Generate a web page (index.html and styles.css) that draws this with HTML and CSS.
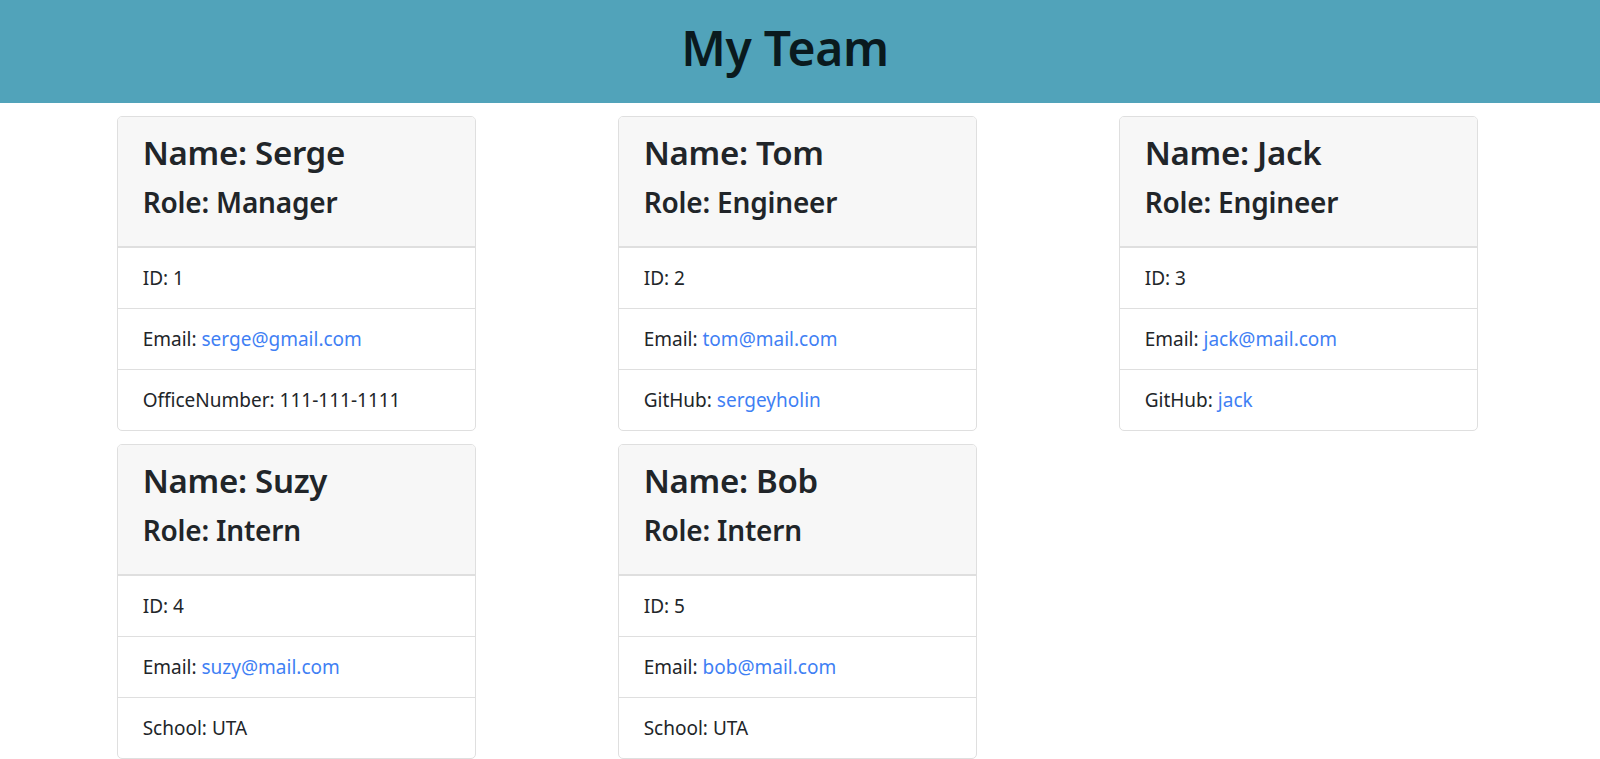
FILE: index.html
```html
<!DOCTYPE html>
<html lang="en">
<head>
<meta charset="utf-8">
<title>My Team</title>
<link rel="stylesheet" href="styles.css">
</head>
<body>
<header class="banner">
  <h1 class="banner-title">My Team</h1>
</header>
<main class="team">
  <div class="card">
    <div class="card-header">
      <h3 class="card-name">Name: Serge</h3>
      <h4 class="card-role">Role: Manager</h4>
    </div>
    <ul class="list">
      <li class="item">ID: 1</li>
      <li class="item">Email: <a class="link" href="#">serge@gmail.com</a></li>
      <li class="item">OfficeNumber: 111-111-1111</li>
    </ul>
  </div>
  <div class="card">
    <div class="card-header">
      <h3 class="card-name">Name: Tom</h3>
      <h4 class="card-role">Role: Engineer</h4>
    </div>
    <ul class="list">
      <li class="item">ID: 2</li>
      <li class="item">Email: <a class="link" href="#">tom@mail.com</a></li>
      <li class="item">GitHub: <a class="link" href="#">sergeyholin</a></li>
    </ul>
  </div>
  <div class="card">
    <div class="card-header">
      <h3 class="card-name">Name: Jack</h3>
      <h4 class="card-role">Role: Engineer</h4>
    </div>
    <ul class="list">
      <li class="item">ID: 3</li>
      <li class="item">Email: <a class="link" href="#">jack@mail.com</a></li>
      <li class="item">GitHub: <a class="link" href="#">jack</a></li>
    </ul>
  </div>
  <div class="card">
    <div class="card-header">
      <h3 class="card-name">Name: Suzy</h3>
      <h4 class="card-role">Role: Intern</h4>
    </div>
    <ul class="list">
      <li class="item">ID: 4</li>
      <li class="item">Email: <a class="link" href="#">suzy@mail.com</a></li>
      <li class="item">School: UTA</li>
    </ul>
  </div>
  <div class="card">
    <div class="card-header">
      <h3 class="card-name">Name: Bob</h3>
      <h4 class="card-role">Role: Intern</h4>
    </div>
    <ul class="list">
      <li class="item">ID: 5</li>
      <li class="item">Email: <a class="link" href="#">bob@mail.com</a></li>
      <li class="item">School: UTA</li>
    </ul>
  </div>
</main>
</body>
</html>
```

FILE: styles.css
```css
html, body {
  margin: 0;
  padding: 0;
}
body {
  font-family: "Noto Sans", "Open Sans", sans-serif;
  font-size: 19px;
  line-height: 30px;
  color: #212529;
  background: #ffffff;
}
.banner {
  height: 103px;
  background: #51a3ba;
  display: flex;
  align-items: center;
  justify-content: center;
  padding: 0 30px 8px 0;
  box-sizing: border-box;
}
.banner-title {
  margin: 0;
  font-size: 48px;
  font-weight: 600;
  line-height: 1.2;
  letter-spacing: -0.3px;
  color: #0a1a1e;
}
.team {
  display: grid;
  grid-template-columns: repeat(3, 501px);
  row-gap: 13px;
  padding: 12.5px 0 20px 116.7px;
  align-items: start;
}
.card {
  width: 359px;
  border: 1px solid #dfdfdf;
  border-radius: 5px;
  overflow: hidden;
  box-sizing: border-box;
  background: #fff;
}
.card-header {
  background: #f7f7f7;
  padding: 15.5px 25px;
  border-bottom: 1px solid #dfdfdf;
}
.card-name {
  margin: 0 0 10px;
  font-size: 33px;
  font-weight: 600;
  line-height: 42px;
  letter-spacing: -0.3px;
}
.card-role {
  margin: 0 0 10px;
  font-size: 28px;
  font-weight: 600;
  line-height: 36px;
  letter-spacing: -0.2px;
}
.list {
  list-style: none;
  margin: 0;
  padding: 0;
}
.item {
  padding: 15px 25px;
  border-top: 1px solid #dfdfdf;
}
.link {
  color: #3f7ff4;
  text-decoration: none;
}
```
